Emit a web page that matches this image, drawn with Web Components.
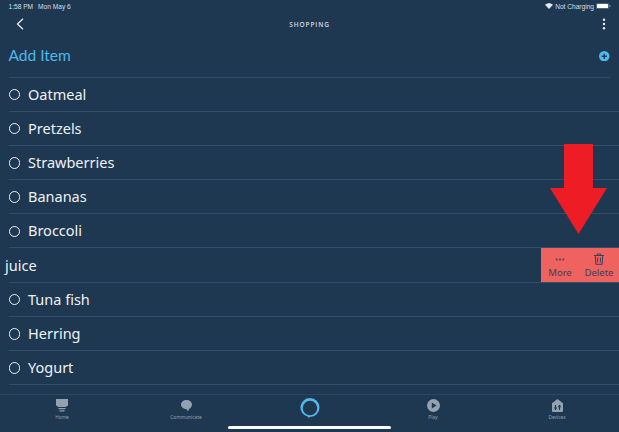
<!DOCTYPE html>
<html>
<head>
<meta charset="utf-8">
<style>
  html, body { margin: 0; padding: 0; background: #1e3852; }
  body { width: 619px; height: 432px; overflow: hidden; font-family: "Noto Sans", sans-serif; }
  list-row:first-of-type { height: 34.100px; }
</style>
</head>
<body>
<shopping-screen>
  <status-bar></status-bar>
  <nav-bar>SHOPPING</nav-bar>
  <add-item>Add Item</add-item>
  <list-row>Oatmeal</list-row>
  <list-row>Pretzels</list-row>
  <list-row>Strawberries</list-row>
  <list-row>Bananas</list-row>
  <list-row>Broccoli</list-row>
  <list-row swiped>juice</list-row>
  <list-row>Tuna fish</list-row>
  <list-row>Herring</list-row>
  <list-row>Yogurt</list-row>
  <tab-bar></tab-bar>
</shopping-screen>
<script>
class ShoppingScreen extends HTMLElement {
  constructor() {
    super();
    this.attachShadow({ mode: 'open' });
    this.shadowRoot.innerHTML = `
    <style>
      :host { display: flex; flex-direction: column; position: relative; width: 619px; height: 432px; overflow: hidden; background: #1e3852; }
      .arrow { position: absolute; left: 550px; top: 144px; width: 57px; height: 90px; }
      .home { position: absolute; left: 228px; top: 426px; width: 163px; height: 3px; border-radius: 2px; background: #fff; }
    </style>
    <slot></slot>
    <svg class="arrow" viewBox="0 0 57 90"><path d="M14 0H43V44H57L28.500 90L0 44H14Z" fill="#ee1c25"/></svg>
    <div class="home"></div>
    `;
  }
}

class StatusBar extends HTMLElement {
  constructor() {
    super();
    this.attachShadow({ mode: 'open' });
    this.shadowRoot.innerHTML = `
    <style>
      :host { display: flex; align-items: center; justify-content: space-between; height: 12px; padding: 0 8px 0 8.500px; font: 6.600px "Liberation Sans", sans-serif; color: #d9dfe5; }
      .right { display: flex; align-items: center; gap: 2px; }
      .left { display: flex; gap: 5px; }
    </style>
    <div class="left"><span>1:58 PM</span><span>Mon May 6</span></div>
    <div class="right">
      <svg width="8" height="6" viewBox="0 0 8 6"><path d="M0 1.800C2.200-.3 5.800-.3 8 1.800L4 6Z" fill="#e6eaee"/></svg>
      <span>Not Charging</span>
      <svg width="15" height="6" viewBox="0 0 15 6"><rect x=".3" y=".3" width="12.400" height="5.400" rx="1.200" fill="none" stroke="#8796a5" stroke-width=".6"/><rect x="1" y="1" width="11" height="4" rx=".6" fill="#fff"/><rect x="13.300" y="2" width="1" height="2" fill="#8796a5"/></svg>
    </div>
    `;
  }
}

class NavBar extends HTMLElement {
  constructor() {
    super();
    this.attachShadow({ mode: 'open' });
    this.shadowRoot.innerHTML = `
    <style>
      :host { display: grid; grid-template-columns: 1fr auto 1fr; align-items: center; height: 24px; padding: 0 13px; color: #d5dbe1; }
      .title { font: 600 6.500px "Open Sans", sans-serif; letter-spacing: .9px; }
      svg { display: block; }
      .back { margin-left: 3px; }
      .more { justify-self: end; }
    </style>
    <svg class="back" width="8" height="12" viewBox="0 0 8 12"><path d="M7 .8L1.500 6L7 11.200" fill="none" stroke="#e6eaee" stroke-width="1.300"/></svg>
    <span class="title"><slot></slot></span>
    <svg class="more" width="4" height="12" viewBox="0 0 4 12" fill="#e6eaee"><circle cx="2" cy="1.700" r="1.200"/><circle cx="2" cy="6" r="1.200"/><circle cx="2" cy="10.300" r="1.200"/></svg>
    `;
  }
}

class AddItem extends HTMLElement {
  constructor() {
    super();
    this.attachShadow({ mode: 'open' });
    this.shadowRoot.innerHTML = `
    <style>
      :host { display: flex; align-items: center; justify-content: space-between; box-sizing: border-box; height: 41.500px; margin: 0 9.500px 0 8.500px; border-bottom: 1px solid #324e69; padding: 0 0 3px; color: #4fb9ea; font: 15.500px Lato, sans-serif; }
      svg { display: block; margin-top: 2px; }
    </style>
    <span><slot></slot></span>
    <svg width="10.500" height="10.500" viewBox="0 0 10 10"><circle cx="5" cy="5" r="5" fill="#4fb9ea"/><path d="M5 2.500V7.500M2.500 5H7.500" stroke="#1e3852" stroke-width="1.200"/></svg>
    `;
  }
}

class ListRow extends HTMLElement {
  constructor() {
    super();
    this.attachShadow({ mode: 'open' });
    const swiped = this.hasAttribute('swiped');
    this.shadowRoot.innerHTML = `
    <style>
      :host { display: flex; align-items: center; position: relative; box-sizing: border-box; height: 34.200px; margin-left: 8.500px; border-bottom: 1px solid #324e69; color: #eef1f4; font: 14.500px "Noto Sans", sans-serif; }
      .radio { box-sizing: border-box; width: 11.500px; height: 11.500px; margin: 1px 8px 0 0; border: 1.300px solid #eef1f4; border-radius: 50%; }
      .text { display: block; margin-top: -1px; }
      :host([swiped]) .text { margin: 0 0 0 -3.500px; }
      .actions { position: absolute; right: 0; top: 0; bottom: -.5px; width: 78px; display: flex; background: #ee6260; color: #3f3f58; font-size: 9.500px; }
      .action { flex: 1; display: flex; flex-direction: column; align-items: center; justify-content: flex-end; padding-bottom: 3px; padding-right: 1px; line-height: 13px; }
      .action svg { display: block; margin-bottom: 1px; }
    </style>
    ${swiped ? '' : '<span class="radio"></span>'}
    <span class="text"><slot></slot></span>
    ${swiped ? `<div class="actions">
      <div class="action">
        <svg width="10" height="12" viewBox="0 0 10 12" fill="#3f3f58"><circle cx="1.700" cy="6.500" r=".9"/><circle cx="5" cy="6.500" r=".9"/><circle cx="8.300" cy="6.500" r=".9"/></svg>
        <span>More</span>
      </div>
      <div class="action">
        <svg width="10" height="12" viewBox="0 0 10 12" fill="none" stroke="#3f3f58" stroke-width="1"><path d="M0 2.500H10M3.300 2.500V1H6.700V2.500M1.300 2.500L1.800 11.300H8.200L8.700 2.500M3.600 4.500V9.500M6.400 4.500V9.500"/></svg>
        <span>Delete</span>
      </div>
    </div>` : ''}
    `;
  }
}

class TabBar extends HTMLElement {
  constructor() {
    super();
    this.attachShadow({ mode: 'open' });
    this.shadowRoot.innerHTML = `
    <style>
      :host { display: block; margin-top: 8.800px; border-top: 1px solid #2c4760; height: 37px; }
      .tabs { display: grid; grid-template-columns: 124px 124px 123px 124px 124px; }
      .tab { display: flex; flex-direction: column; align-items: center; padding-top: 4px; color: #93a1b0; font: 4.800px "Noto Sans", sans-serif; }
      .tab svg { display: block; height: 13px; margin-bottom: 2px; }
      .alexa { padding-top: 3px; }
      .alexa svg { height: 20px; width: 20px; margin: 0; }
    </style>
    <div class="tabs">
      <div class="tab"><svg width="12" viewBox="0 0 12 13" fill="#93a1b0"><path d="M0 0H12V6.500L9.500 8H2.500L0 6.500Z"/><rect x="2.500" y="9" width="7" height="1.200"/><rect x="3.500" y="11.300" width="5" height="1.200"/></svg><span>Home</span></div>
      <div class="tab"><svg width="11" viewBox="0 0 11 13" fill="#93a1b0"><path d="M5.500 1C8.500 1 11 3 11 5.500S9.200 9.500 8 10L7 12.500C6.300 11.500 6 10.700 5.500 10C2.500 10 0 8 0 5.500S2.500 1 5.500 1Z"/></svg><span>Communicate</span></div>
      <div class="tab alexa"><svg viewBox="0 0 20 20"><path fill-rule="evenodd" fill="#4fb9ea" d="M10 0A9.500 9.500 0 0 1 10 19L8.600 19.900L8 18.800A9.500 9.500 0 0 1 10 0ZM10 2.800A6.400 6.400 0 0 0 10 17.300A7.200 7.200 0 0 0 10 2.800Z"/></svg></div>
      <div class="tab"><svg width="13" viewBox="0 0 13 13"><circle cx="6.500" cy="6.500" r="6.500" fill="#93a1b0"/><path d="M4.800 3.500L9.500 6.500L4.800 9.500Z" fill="#1e3852"/></svg><span>Play</span></div>
      <div class="tab"><svg width="13" viewBox="0 0 13 13"><path d="M6.500 0L12 4.200V12A1 1 0 0 1 11 13H2A1 1 0 0 1 1 12V4.200Z" fill="#93a1b0"/><path d="M4.500 6V11M8.500 6V11" stroke="#1e3852" stroke-width="1.100"/><circle cx="4.500" cy="9" r="1.200" fill="#1e3852"/><circle cx="8.500" cy="7.500" r="1.200" fill="#1e3852"/></svg><span>Devices</span></div>
    </div>
    `;
  }
}

customElements.define('shopping-screen', ShoppingScreen);
customElements.define('status-bar', StatusBar);
customElements.define('nav-bar', NavBar);
customElements.define('add-item', AddItem);
customElements.define('list-row', ListRow);
customElements.define('tab-bar', TabBar);
</script>
</body>
</html>
